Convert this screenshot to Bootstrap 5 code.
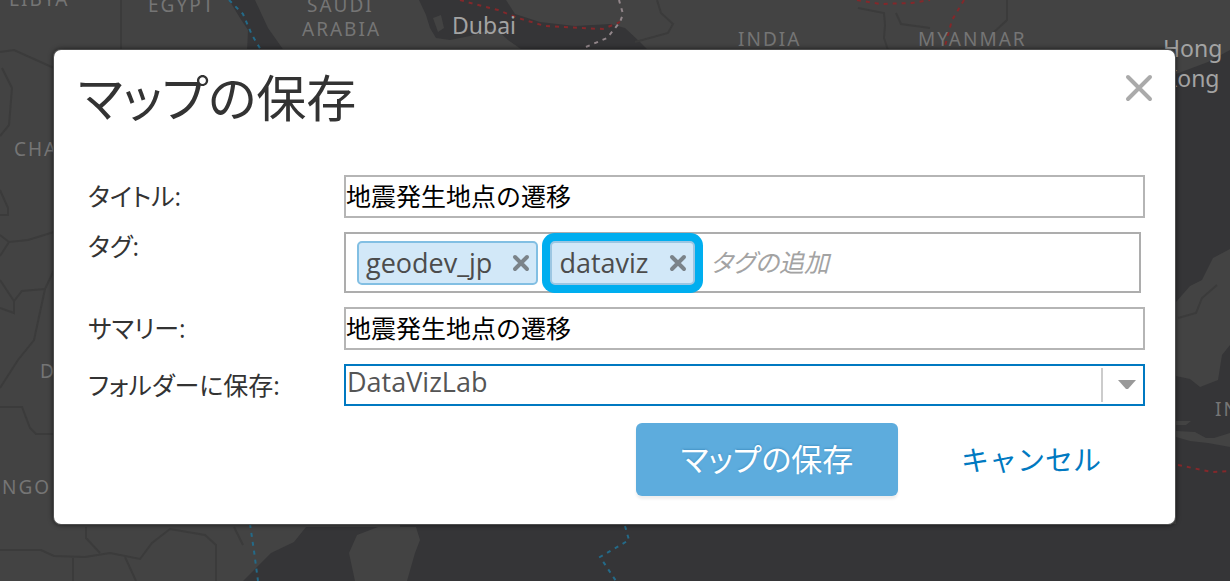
<!DOCTYPE html>
<html lang="ja">
<head>
<meta charset="utf-8">
<meta name="viewport" content="width=device-width, initial-scale=1">
<title>マップの保存</title>
<link href="https://cdn.jsdelivr.net/npm/bootstrap@5.3.0/dist/css/bootstrap.min.css" rel="stylesheet">
<style>
  body { background: #353537; font-family: "Open Sans", "Noto Sans CJK JP", sans-serif; color: #333; min-height: 100vh; }
  .basemap { width: 100%; height: 100%; z-index: 0; }
  .basemap text { font-family: "Noto Sans", sans-serif; font-size: 19px; fill: #757575; }
  .basemap .region { letter-spacing: 2px; }
  .basemap .city { font-size: 23px; fill: #a3a3a3; }
  .save-dialog { z-index: 1; margin: 50px 55px 56px 54px; padding: 16px 22px 28px 24px; border-radius: 7px; box-shadow: 0 0 5px 1px rgba(0,0,0,.6), 0 0 0 1px #777; background: #fff; }
  .dialog-title { font-size: 50px; line-height: 64px; font-weight: 400; }
  .kana { font-feature-settings: "palt"; }
  .dialog-close { width: 28px; height: 28px; margin-top: 8px; }
  .save-form { padding: 45px 8px 0 10px; }
  .field-row { margin-bottom: 14px; }
  .field-label { width: 256px; font-size: 25px; line-height: 42px; }
  .field-label-top { line-height: 28px; }
  .field-box { border: 2px solid #b5b5b5; border-radius: 0; padding: 0 0 4px; font-size: 25px; line-height: 35px; height: 43px; color: #000; }
  .tag-box { border: 2px solid #adadad; height: 61px; margin-right: 4px; padding-left: 11px; gap: 12px; }
  .tag-chip { height: 44px; padding: 0 6px 0 7px; border: 2px solid #82bfe3; border-radius: 5px; background: #d2e8f8; font-size: 27px; line-height: 36px; color: #4c4c4c; }
  .tag-chip.highlighted { box-shadow: 0 0 0 8px #00aeef; border-color: #9cc6e2; }
  .tag-remove { width: 18px; margin-left: 20px; }
  .tag-input { font-size: 25px; font-style: italic; min-width: 0; margin-left: 4px; outline: 0; }
  .tag-input::placeholder { color: #a3a3a3; }
  .folder-select { border: 2px solid #0079c1; border-radius: 0; height: 42px; padding: 0 48px 6px 1px; font-size: 27px; line-height: 32px; color: #555; background-image: none; }
  .select-arrow { top: 4px; bottom: 4px; right: 2px; width: 42px; border-left: 2px solid #ccc; padding-left: 8px; pointer-events: none; }
  .actions { padding-right: 15px; margin-top: 17px; }
  .save-button { width: 262px; height: 73px; border: 0; border-radius: 6px; background: #5dacdd; color: #fff; font-size: 31px; box-shadow: 0 3px 3px #eee; text-shadow: 0 -1px 2px #4594c6; }
  .cancel-button { width: 232px; height: 73px; border: 0; font-size: 28px; color: #0079c1; padding: 0 0 0 34px; }
</style>
</head>
<body class="position-relative overflow-hidden">
<svg class="basemap position-absolute top-0 start-0" viewBox="0 0 1230 581" preserveAspectRatio="xMidYMid slice" aria-hidden="true">
  <path fill="#434343" d="M0 0H1230V50L1208 62L1176 74V527H306L294 542L271 553L243 581H0Z"/>
  <path fill="#353537" d="M400 524H1176V581H400Z"/>
  <path fill="#353537" d="M229 0L240 18L248 30L247 52H285L268 28L255 0ZM419 0L426 15L430 28L436 38L450 40L470 36L495 28L508 40L525 52H650L640 42L625 28L610 24L575 26L540 22L515 14L506 0ZM1176 74V520H1100V70Z"/>
  <path fill="#434343" d="M378 527L357 535L349 553L355 581H407L415 553L420 540L416 527ZM433 18L441 15L444 28L438 32ZM1176 302L1190 286L1202 280L1213 258L1230 249V345L1222 355L1218 380L1200 387L1190 379L1176 376ZM1176 421L1191 421L1186 425L1176 425ZM1176 431L1195 432L1206 438L1214 438L1230 433V447L1208 443L1190 441L1176 437Z"/>
  <g fill="none" stroke="#3b3b3b" stroke-width="2">
    <path d="M121 0V50M0 52L14 50L54 68M2 68L12 88L9 125L0 136M0 190L8 208V215H0M0 235L9 242L28 240L54 232M9 242L0 256M0 280L14 301L22 291L45 289L54 270M14 301V313L0 308M45 289L34 340L18 360L0 388M0 407H22L30 428L36 434H54M0 550H41L54 556L85 557L110 553L140 559L152 543L170 529L205 535L216 545V581M86 527V538L100 553M73 557V581M125 557L136 581M234 527L243 545M657 0L661 13L673 24L668 33L635 42M858 8L884 13L885 25L884 38L888 50M896 13L901 24L930 28M1007 0V20L993 33M1178 318L1196 313L1202 298L1217 285"/>
  </g>
  <g fill="none" stroke-width="2" stroke-dasharray="4 5">
    <path stroke="#246a88" d="M229 0L243 14L252 35L261 50M250 524L254 551L258 581M625 526L629 540L600 557L616 581"/>
    <path stroke="#83282b" d="M460 0L474 4L498 10L518 18L545 26L580 28L603 29L620 22M857 0L880 4L912 3L930 0M964 0L952 20L945 46M1178 465L1212 472L1230 471"/>
    <path stroke="#92868a" d="M586 47L607 38L620 22L623 14L619 0"/>
  </g>
  <g class="region">
    <text x="9" y="6">LIBYA</text><text x="148" y="12">EGYPT</text>
    <text x="307" y="12">SAUDI</text><text x="302" y="36">ARABIA</text>
    <text x="738" y="46">INDIA</text><text x="918" y="46">MYANMAR</text>
    <text x="14" y="156">CHAD</text><text x="40" y="378">D</text><text x="2" y="494">NGO</text>
    <text x="1215" y="416">IN</text>
  </g>
  <text class="city" x="452" y="34">Dubai</text>
  <text class="city" x="1163" y="57">Hong</text><text class="city" x="1163" y="87">Kong</text>
</svg>

<main class="save-dialog position-relative" role="dialog" aria-labelledby="dialogTitle">
  <header class="d-flex justify-content-between align-items-start">
    <h1 class="dialog-title kana mb-0" id="dialogTitle">マップの保存</h1>
    <button type="button" class="dialog-close btn border-0 p-0 d-flex" aria-label="閉じる">
      <svg viewBox="0 0 28 28" width="28" height="28" aria-hidden="true"><path d="M3 3L25 25M25 3L3 25" stroke="#aaa" stroke-width="4" stroke-linecap="round"/></svg>
    </button>
  </header>
  <form class="save-form">
    <div class="field-row d-flex">
      <label class="field-label kana flex-shrink-0" for="mapTitle">タイトル:</label>
      <input class="field-box form-control" id="mapTitle" type="text" value="地震発生地点の遷移">
    </div>
    <div class="field-row d-flex">
      <label class="field-label field-label-top kana flex-shrink-0" for="mapTags">タグ:</label>
      <div class="tag-box d-flex align-items-center flex-grow-1">
        <span class="tag-chip d-flex align-items-center flex-shrink-0">geodev_jp
          <button type="button" class="tag-remove btn border-0 p-0 d-flex" aria-label="geodev_jp を削除"><svg viewBox="0 0 18 18" width="18" height="18" aria-hidden="true"><path d="M3 3L15 15M15 3L3 15" stroke="#7b8389" stroke-width="4" stroke-linecap="round"/></svg></button>
        </span>
        <span class="tag-chip highlighted d-flex align-items-center flex-shrink-0">dataviz
          <button type="button" class="tag-remove btn border-0 p-0 d-flex" aria-label="dataviz を削除"><svg viewBox="0 0 18 18" width="18" height="18" aria-hidden="true"><path d="M3 3L15 15M15 3L3 15" stroke="#7b8389" stroke-width="4" stroke-linecap="round"/></svg></button>
        </span>
        <input class="tag-input kana border-0 bg-transparent p-0 flex-grow-1" id="mapTags" type="text" placeholder="タグの追加">
      </div>
    </div>
    <div class="field-row d-flex">
      <label class="field-label kana flex-shrink-0" for="mapSummary">サマリー:</label>
      <input class="field-box form-control" id="mapSummary" type="text" value="地震発生地点の遷移">
    </div>
    <div class="d-flex">
      <label class="field-label kana flex-shrink-0" for="mapFolder">フォルダーに保存:</label>
      <div class="position-relative flex-grow-1">
        <select class="folder-select form-select" id="mapFolder"><option>DataVizLab</option></select>
        <span class="select-arrow position-absolute d-flex align-items-center justify-content-center">
          <svg viewBox="0 0 18 10" width="18" height="10" aria-hidden="true"><path d="M0 0H18L10 9H8Z" fill="#999"/></svg>
        </span>
      </div>
    </div>
    <div class="actions d-flex justify-content-end">
      <button type="submit" class="save-button btn kana">マップの保存</button>
      <button type="button" class="cancel-button btn">キャンセル</button>
    </div>
  </form>
</main>
<script src="https://cdn.jsdelivr.net/npm/bootstrap@5.3.0/dist/js/bootstrap.bundle.min.js"></script>
</body>
</html>
